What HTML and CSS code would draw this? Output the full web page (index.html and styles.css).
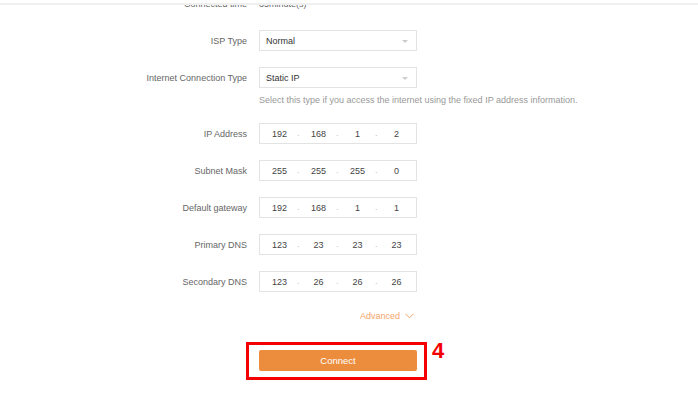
FILE: index.html
```html
<!DOCTYPE html>
<html lang="en">
<head>
    <meta charset="UTF-8">
    <meta name="viewport" content="width=device-width, initial-scale=1.0">
    <title>Internet Settings</title>
    <link rel="stylesheet" href="styles.css">
</head>
<body>
    <div class="topbar"></div>

    <div class="form">
        <div class="row">
            <label>Connected time</label>
            <span class="value">35minute(s)</span>
        </div>

        <div class="row">
            <label>ISP Type</label>
            <div class="select">Normal<i class="caret"></i></div>
        </div>

        <div class="row">
            <label>Internet Connection Type</label>
            <div class="select">Static IP<i class="caret"></i></div>
        </div>
        <p class="hint">Select this type if you access the internet using the fixed IP address information.</p>

        <div class="row">
            <label>IP Address</label>
            <div class="ip"><span>192</span><span>168</span><span>1</span><span>2</span></div>
        </div>

        <div class="row">
            <label>Subnet Mask</label>
            <div class="ip"><span>255</span><span>255</span><span>255</span><span>0</span></div>
        </div>

        <div class="row">
            <label>Default gateway</label>
            <div class="ip"><span>192</span><span>168</span><span>1</span><span>1</span></div>
        </div>

        <div class="row">
            <label>Primary DNS</label>
            <div class="ip"><span>123</span><span>23</span><span>23</span><span>23</span></div>
        </div>

        <div class="row">
            <label>Secondary DNS</label>
            <div class="ip"><span>123</span><span>26</span><span>26</span><span>26</span></div>
        </div>

        <div class="advanced">
            Advanced
            <svg width="9" height="6" viewBox="0 0 9 6"><path d="M0.5 0.8 L4.5 4.8 L8.5 0.8" fill="none" stroke="#f4a46a" stroke-width="1"/></svg>
        </div>

        <div class="submit">
            <div class="mark">
                <button>Connect</button>
            </div>
            <span class="step">4</span>
        </div>
    </div>
</body>
</html>
```

FILE: styles.css
```css
body {
    margin: 0;
    background: #fff;
    font-family: 'Liberation Sans', Arial, sans-serif;
    font-size: 9px;
    color: #333;
    overflow: hidden;
}
.topbar {
    position: absolute;
    top: 0;
    left: 0;
    right: 0;
    height: 3px;
    background: #fff;
    border-bottom: 2px solid #efefef;
    z-index: 2;
}
.form {
    margin-top: -7px;
    padding-left: 107px;
}
.row {
    display: flex;
    align-items: center;
    height: 21px;
    margin-bottom: 16px;
}
.row label {
    width: 140px;
    margin-right: 12px;
    text-align: right;
    color: #666;
}
.value {
    color: #666;
}
.select, .ip {
    box-sizing: border-box;
    width: 158px;
    height: 21px;
    border: 1px solid #e3e3e3;
    background: #fff;
}
.select {
    position: relative;
    display: flex;
    align-items: center;
    padding-left: 6px;
    color: #333;
}
.caret {
    position: absolute;
    right: 8px;
    top: 9px;
    width: 0;
    height: 0;
    border-left: 3.5px solid transparent;
    border-right: 3.5px solid transparent;
    border-top: 3.5px solid #ccc;
}
.hint {
    margin: -10px 0 17px 152px;
    line-height: 12px;
    color: #999;
}
.ip {
    display: flex;
}
.ip span {
    flex: 1;
    position: relative;
    display: flex;
    align-items: center;
    justify-content: center;
    color: #444;
}
.ip span + span::before {
    content: ".";
    position: absolute;
    left: -2px;
    top: 4px;
    color: #bbb;
}
.advanced {
    display: flex;
    align-items: center;
    justify-content: flex-end;
    gap: 5px;
    width: 307px;
    margin-top: 18px;
    height: 12px;
    color: #f4a46a;
}
.submit {
    display: flex;
    align-items: flex-start;
    margin: 20px 0 0 139px;
}
.mark {
    border: 3px solid #f50000;
    padding: 5px 7px 6px 10px;
}
.mark button {
    display: block;
    width: 158px;
    height: 21px;
    border: none;
    border-radius: 2px;
    background: #ec8d3d;
    color: #fff;
    font-family: 'Liberation Sans', Arial, sans-serif;
    font-size: 9.5px;
    cursor: pointer;
}
.step {
    margin: -4px 0 0 5px;
    font-size: 22px;
    font-weight: bold;
    color: #f50000;
}
```
